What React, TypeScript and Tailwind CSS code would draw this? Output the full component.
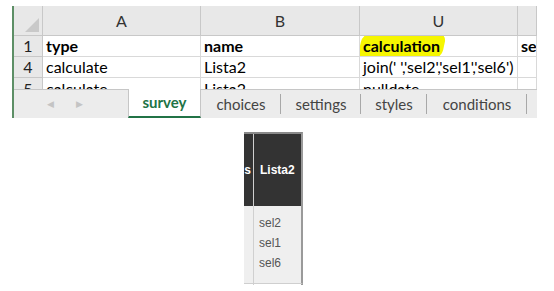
const cols = ["w-[158px]", "w-[159px]", "w-[158px]", "w-[19px]"];

function Cell({ w, children, className = "" }: { w: string; children?: React.ReactNode; className?: string }) {
  return (
    <div className={`${w} shrink-0 border-r border-b border-[#d9d9d9] pl-[3px] flex items-center overflow-hidden whitespace-nowrap ${className}`}>
      {children}
    </div>
  );
}

function RowNum({ n }: { n: string }) {
  return (
    <div className="w-[29px] shrink-0 bg-[#e8e8e8] border-r border-b border-[#c8c8c8] flex items-center justify-center text-[#222]">
      {n}
    </div>
  );
}

function Tab({ label, w }: { label: string; w: string }) {
  return (
    <div className={`${w} shrink-0 h-full flex items-center justify-center relative text-[#444]`}>
      {label}
      <span className="absolute right-0 top-[4px] h-[20px] w-px bg-[#a8a8a8]" />
    </div>
  );
}

export default function App() {
  return (
    <div className="w-[554px] h-[291px] bg-white overflow-hidden" style={{ fontFamily: "Lato, 'Open Sans', sans-serif" }}>
      {/* spreadsheet */}
      <div className="ml-[12px] mt-[6px] w-[525px] border-l-2 border-[#5d8f66] flex flex-col text-[16px] text-black">
        {/* column letters */}
        <div className="flex h-[30px] bg-[#e8e8e8] text-[#333]">
          <div className="w-[29px] shrink-0 border-r border-b border-[#c8c8c8] relative">
            <span className="absolute right-[3px] bottom-[3px] w-0 h-0 border-l-[14px] border-l-transparent border-b-[14px] border-b-[#c9c9c9]" />
          </div>
          {["A", "B", "U", ""].map((l, i) => (
            <div key={i} className={`${cols[i]} shrink-0 border-r border-b border-[#c8c8c8] flex items-center justify-center`}>
              {l}
            </div>
          ))}
        </div>

        {/* row 1 */}
        <div className="flex h-[21px]">
          <RowNum n="1" />
          <Cell w={cols[0]} className="font-bold">type</Cell>
          <Cell w={cols[1]} className="font-bold">name</Cell>
          <Cell w={cols[2]} className="font-bold">
            <span className="relative">
              <span className="absolute -left-[3px] -right-[4px] top-[-1px] bottom-[-1px] bg-[#f6f600] rounded-[9px] -skew-x-12" />
              <span className="relative">calculation</span>
            </span>
          </Cell>
          <Cell w={cols[3]} className="font-bold">se</Cell>
        </div>

        {/* row 4 */}
        <div className="flex h-[21px]">
          <RowNum n="4" />
          <Cell w={cols[0]}>calculate</Cell>
          <Cell w={cols[1]}>Lista2</Cell>
          <Cell w={cols[2]}>join(' ','sel2','sel1','sel6')</Cell>
          <Cell w={cols[3]} />
        </div>

        {/* row 5, cut by the tab bar */}
        <div className="flex h-[11px] overflow-hidden">
          <div className="w-[29px] shrink-0 bg-[#e8e8e8] border-r border-[#c8c8c8] text-center leading-[21px] text-[#222]">5</div>
          <div className="w-[158px] shrink-0 border-r border-[#d9d9d9] pl-[3px] leading-[21px]">calculate</div>
          <div className="w-[159px] shrink-0 border-r border-[#d9d9d9] pl-[3px] leading-[21px]">Lista2</div>
          <div className="w-[158px] shrink-0 border-r border-[#d9d9d9] pl-[3px] leading-[21px]">nulldate</div>
          <div className="w-[19px] shrink-0 border-r border-[#d9d9d9]" />
        </div>

        {/* sheet tabs */}
        <div className="flex h-[29px] bg-[#ececec] border-t border-[#c6c6c6] text-[15px]">
          <div className="w-[114px] shrink-0 flex items-center text-[#c4c4c4] text-[9px]">
            <span className="ml-[33px]">◀</span>
            <span className="ml-[22px]">▶</span>
          </div>
          <div className="w-[73px] shrink-0 -mt-px h-[29px] bg-white border-x border-[#c6c6c6] border-b-2 border-b-[#217346] flex items-center justify-center font-bold text-[#217346]">
            survey
          </div>
          <Tab label="choices" w="w-[80px]" />
          <Tab label="settings" w="w-[80px]" />
          <Tab label="styles" w="w-[66px]" />
          <Tab label="conditions" w="w-[100px]" />
        </div>
      </div>

      {/* rendered form preview */}
      <div className="ml-[244px] mt-[14px] w-[59px] flex flex-col text-[12px]" style={{ fontFamily: "'Liberation Sans', Arial, sans-serif" }}>
        <div className="flex border-t-2 border-[#8a8a8a] border-r-2 border-r-[#9a9a9a] bg-[#333333] h-[74px]">
          <div className="w-[10px] shrink-0 border-r border-[#d0d0d0] flex items-center justify-end pr-[2px] overflow-hidden font-bold text-white">s</div>
          <div className="flex-1 flex items-center pl-[6px] font-bold text-white">Lista2</div>
        </div>
        <div className="flex border-r-2 border-[#9a9a9a] bg-[#efefef] h-[77px]">
          <div className="w-[10px] shrink-0 border-r border-[#d0d0d0]" />
          <div className="flex-1 flex flex-col pt-[7px] pl-[5px] leading-[20px] text-[#555]">
            <span>sel2</span>
            <span>sel1</span>
            <span>sel6</span>
          </div>
        </div>
        <div className="flex border-t border-[#cfcfcf] border-r-2 border-r-[#9a9a9a] h-[2px]">
          <div className="w-[10px] shrink-0 border-r border-[#d0d0d0]" />
        </div>
      </div>
    </div>
  );
}
